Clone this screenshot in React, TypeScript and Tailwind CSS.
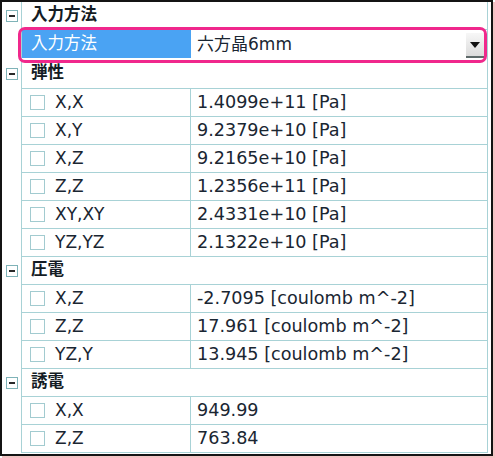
import React from "react";

const FONT = { fontFamily: '"DejaVu Sans", "Noto Sans CJK JP", sans-serif' };

function Minus() {
  return (
    <div className="w-[12px] h-[12px] border border-[#7fb3b8] bg-white flex items-center justify-center">
      <div className="w-[6px] h-[2px] bg-[#2a2a2a]" />
    </div>
  );
}

function Gutter({ group }: { group?: boolean }) {
  return (
    <div className="w-[20px] shrink-0 border-r border-[#a8d2d6] flex items-center justify-center">
      {group ? <Minus /> : null}
    </div>
  );
}

function GroupRow({ label, h = "h-[28px]" }: { label: string; h?: string }) {
  return (
    <div className={`flex ${h}`}>
      <Gutter group />
      <div className="flex-1 border-b border-[#a8d2d6] flex items-center pl-[9px]">
        <span className="text-[16.5px] font-bold text-[#141c24] leading-none">{label}</span>
      </div>
    </div>
  );
}

function ItemRow({ name, value }: { name: string; value: string }) {
  return (
    <div className="flex h-[28px]">
      <Gutter />
      <div className="w-[169px] shrink-0 border-r border-b border-[#a8d2d6] flex items-center pl-[8px]">
        <div className="w-[15px] h-[15px] border border-[#a2cbd0] bg-white" />
        <span className="ml-[10px] text-[17px] text-[#1a2632] leading-none">{name}</span>
      </div>
      <div className="flex-1 border-b border-[#a8d2d6] flex items-center pl-[6px]">
        <span className="text-[17.6px] text-[#1a2632] leading-none whitespace-nowrap">{value}</span>
      </div>
    </div>
  );
}

function ComboRow() {
  return (
    <div className="flex h-[28px]">
      <Gutter />
      <div className="w-[169px] shrink-0 bg-[#4aa3f3] flex items-center pl-[9px]">
        <span className="text-[16.5px] text-white leading-none">入力方法</span>
      </div>
      <div className="flex-1 flex items-center pl-[6px] pr-[3px]">
        <span className="text-[17px] text-[#1a2632] leading-none">六方晶6mm</span>
        <div className="ml-auto w-[18px] h-[25px] mt-[3px] bg-gradient-to-b from-[#f7f7f7] to-[#dcdcdc] border-b-2 border-[#5e6a6a] flex items-center justify-center">
          <svg width="10" height="6" viewBox="0 0 10 6">
            <path d="M0 0 L10 0 L5 6 Z" fill="#111" />
          </svg>
        </div>
      </div>
    </div>
  );
}

export default function App() {
  return (
    <div className="relative w-[495px] h-[458px] bg-white" style={FONT}>
      <div className="w-[493px] h-[456px] border-2 border-[#141414] bg-white shadow-[2px_2px_0_#f2c4c4]">
        <div className="w-[486px] flex flex-col border-r border-[#a8d2d6]">
          <GroupRow label="入力方法" />
          <ComboRow />
          <GroupRow label="弾性" h="h-[31px]" />
          <ItemRow name="X,X" value="1.4099e+11 [Pa]" />
          <ItemRow name="X,Y" value="9.2379e+10 [Pa]" />
          <ItemRow name="X,Z" value="9.2165e+10 [Pa]" />
          <ItemRow name="Z,Z" value="1.2356e+11 [Pa]" />
          <ItemRow name="XY,XY" value="2.4331e+10 [Pa]" />
          <ItemRow name="YZ,YZ" value="2.1322e+10 [Pa]" />
          <GroupRow label="圧電" />
          <ItemRow name="X,Z" value="-2.7095 [coulomb m^-2]" />
          <ItemRow name="Z,Z" value="17.961 [coulomb m^-2]" />
          <ItemRow name="YZ,Y" value="13.945 [coulomb m^-2]" />
          <GroupRow label="誘電" />
          <ItemRow name="X,X" value="949.99" />
          <ItemRow name="Z,Z" value="763.84" />
        </div>
      </div>
      <div className="absolute left-[18px] top-[27px] w-[469px] h-[36px] border-[3px] border-[#f0288c] rounded-[7px] pointer-events-none" />
    </div>
  );
}
